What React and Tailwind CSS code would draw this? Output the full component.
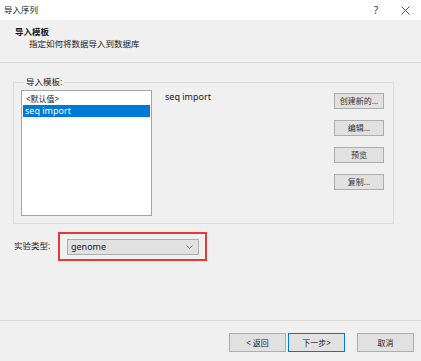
import React from 'react';

const font = { fontFamily: '"Noto Sans", "Noto Sans CJK SC", sans-serif' };

function SideButton({ children }) {
  return (
    <button className="w-[50px] h-[16px] bg-[#e1e1e1] border border-[#adadad] text-[8px] text-[#333] leading-none flex items-center justify-center">
      {children}
    </button>
  );
}

function FooterButton({ children, active }) {
  return (
    <button
      className={
        'w-[57px] h-[19px] bg-[#e1e1e1] text-[8px] text-[#222] leading-none flex items-center justify-center border ' +
        (active ? 'border-[#0078d7]' : 'border-[#adadad]')
      }
    >
      {children}
    </button>
  );
}

export default function App() {
  return (
    <div className="w-[421px] h-[361px] bg-[#f0f0f0] flex flex-col text-[#1a1a1a]" style={font}>
      {/* title bar */}
      <div className="h-[20px] bg-white flex items-center pl-[4px] pr-[10px] text-[8.5px]">
        <span className="flex-1">导入序列</span>
        <span className="mr-[23px] text-[10px] text-[#333]">?</span>
        <svg width="9" height="9" viewBox="0 0 9 9" className="mr-[1px]">
          <path d="M0.5 0.5 L8.5 8.5 M8.5 0.5 L0.5 8.5" stroke="#444" strokeWidth="0.9" />
        </svg>
      </div>

      {/* header */}
      <div className="h-[43px] border-b border-[#d9d9d9] pl-[15px] pt-[6px] flex flex-col">
        <span className="text-[8.5px] font-bold leading-[12px]">导入模板</span>
        <span className="text-[8.5px] leading-[12px] pl-[14px]">指定如何将数据导入到数据库</span>
      </div>

      {/* body */}
      <div className="flex-1 flex flex-col px-[13px] pt-[13px]">
        <fieldset className="w-[381px] h-[148px] border border-[#dcdcdc] pl-[7px] pr-[9px] pt-[2px] flex">
          <legend className="ml-[3px] px-[2px] text-[8.5px] leading-[12px]">导入模板:</legend>
          <div className="w-[131px] h-[126px] bg-white border border-[#a5a5a5] pt-[2px] px-[1px] text-[9px]">
            <div className="h-[12px] leading-[12px] pl-[3px] text-[8px]">&lt;默认值&gt;</div>
            <div className="h-[12px] leading-[12px] pl-[2px] bg-[#0078d7] text-white">seq import</div>
          </div>
          <div className="flex-1 pl-[13px] pt-[1px] text-[9px] leading-[12px]">seq import</div>
          <div className="flex flex-col gap-[11px] pt-[3px]">
            <SideButton>创建新的...</SideButton>
            <SideButton>编辑...</SideButton>
            <SideButton>预览</SideButton>
            <SideButton>复制...</SideButton>
          </div>
        </fieldset>

        <div className="flex items-center mt-[8px]">
          <span className="w-[45px] pl-[1px] text-[8.5px]">实验类型:</span>
          <div className="w-[149px] h-[29px] border-2 border-[#e53935] flex items-center pl-[7px]">
            <div className="w-[132px] h-[16px] bg-[#e1e1e1] border border-[#adadad] flex items-center pl-[3px] pr-[5px] text-[9px]">
              <span className="flex-1 leading-none">genome</span>
              <svg width="7" height="4" viewBox="0 0 7 4">
                <path d="M0.5 0.5 L3.5 3.5 L6.5 0.5" fill="none" stroke="#555" strokeWidth="0.8" />
              </svg>
            </div>
          </div>
        </div>
      </div>

      {/* footer */}
      <div className="h-[41px] border-t border-[#d9d9d9] flex items-start pt-[12px] pl-[229px] gap-[2px]">
        <FooterButton>&lt; 返回</FooterButton>
        <FooterButton active>下一步&gt;</FooterButton>
        <div className="w-[8px]" />
        <FooterButton>取消</FooterButton>
      </div>
    </div>
  );
}
